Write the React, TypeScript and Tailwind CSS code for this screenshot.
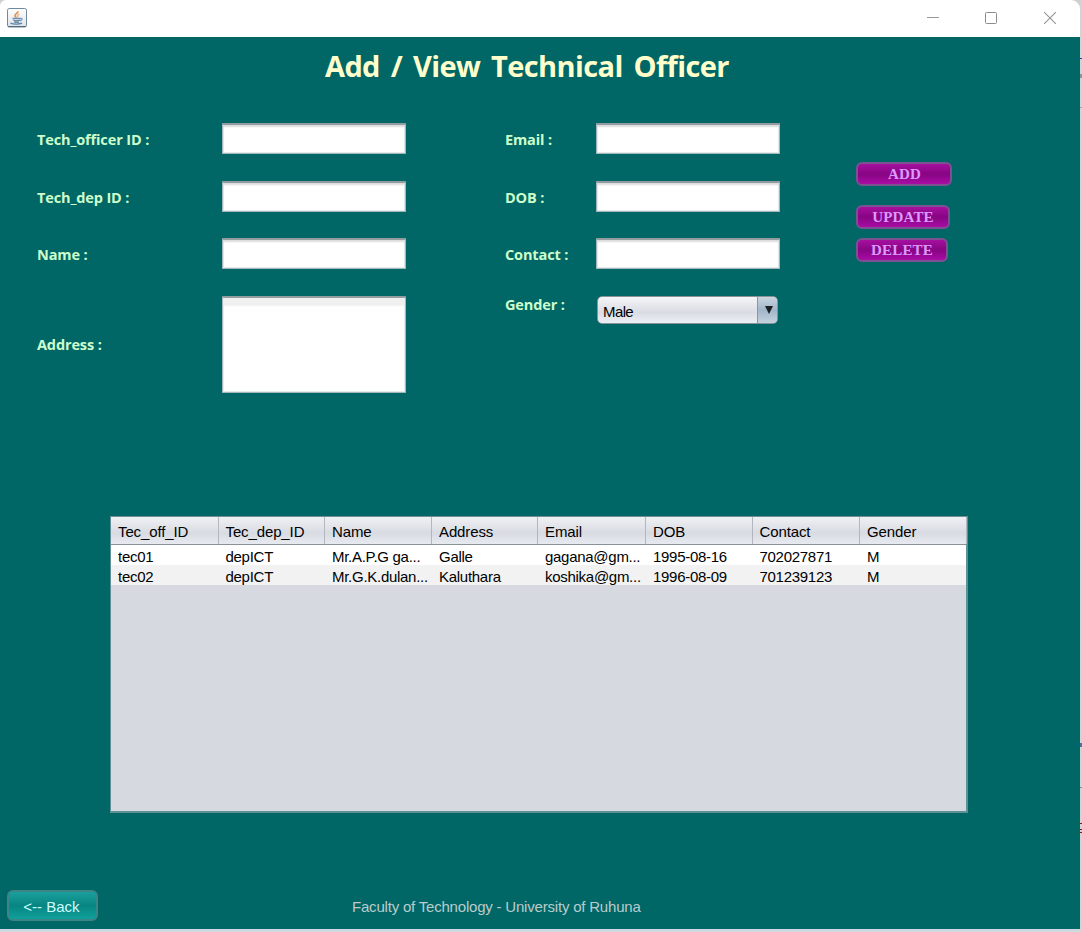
import React from "react";

const columns = ["Tec_off_ID", "Tec_dep_ID", "Name", "Address", "Email", "DOB", "Contact", "Gender"];

const rows = [
  ["tec01", "depICT", "Mr.A.P.G ga...", "Galle", "gagana@gm...", "1995-08-16", "702027871", "M"],
  ["tec02", "depICT", "Mr.G.K.dulan...", "Kaluthara", "koshika@gm...", "1996-08-09", "701239123", "M"],
];

const tableGrid = "grid grid-cols-[107.5px_106.5px_107px_106px_108px_106.5px_107.5px_107px]";

const sans = "font-['Liberation_Sans',Arial,sans-serif]";
const humanist = "font-['Open_Sans','Noto_Sans',sans-serif]";

function TitleBar() {
  return (
    <header className="flex h-[37px] items-center justify-between rounded-tl-md rounded-tr-[9px] bg-white pb-0.5">
      <svg className="ml-[7px] block" width="20" height="20" viewBox="0 0 20 20" fill="none">
        <defs>
          <linearGradient id="cup-bg" x1="0" y1="0" x2="0" y2="1">
            <stop offset="0" stopColor="#ffffff" />
            <stop offset="1" stopColor="#dde2e8" />
          </linearGradient>
        </defs>
        <rect x="0.5" y="0.5" width="19" height="18.5" rx="1.8" fill="url(#cup-bg)" stroke="#71899c" />
        <path d="M1 18.5h18" stroke="#526b80" />
        <path d="M10.8 3.2c.8 2-3.2 2.8-2.8 4.5.2.9 1 1.3 1.1 2" stroke="#e5914d" strokeWidth="1.7" />
        <path d="M12.3 6.2c-1.8.8-2.2 1.5-1.1 3.2" stroke="#eba56b" strokeWidth="1.2" />
        <path d="M5.5 10.5h8.2M6.3 12.2c2 .7 4.6.7 6.7 0M7 13.8c1.6.6 3.6.6 5.1 0" stroke="#6e91ae" strokeWidth="1.3" />
        <path d="M13.5 10.4c2.2-.6 2.2 1.8-.6 2.5" stroke="#6e91ae" strokeWidth="1.1" />
        <path d="M3.5 15.2c2.6 1.2 9.2 1.2 11.5 0" stroke="#5d84a5" strokeWidth="1.4" />
      </svg>
      <div className="mr-6 flex items-center gap-[46px]">
        <svg width="12" height="12" viewBox="0 0 12 12"><path d="M0 5.5h12" stroke="#999999" /></svg>
        <svg width="12" height="12" viewBox="0 0 12 12" fill="none"><rect x="0.5" y="0.5" width="11" height="11" rx="1" stroke="#8c8c8c" /></svg>
        <svg className="ml-px" width="12" height="12" viewBox="0 0 12 12"><path d="M0 0l12 12M12 0L0 12" stroke="#949494" strokeWidth="1.1" /></svg>
      </div>
    </header>
  );
}

function Label({ children, className = "" }: { children: React.ReactNode; className?: string }) {
  return (
    <label className={`${humanist} whitespace-nowrap text-[14.5px] font-bold leading-5 tracking-[-0.13px] text-[#ccffcc] ${className}`}>
      {children}
    </label>
  );
}

const field =
  "block w-[184px] resize-none rounded-[1px] border border-t-2 border-x-[#a3b8bc] border-b-[#a3b8bc] border-t-[#939ca0] bg-white outline-none";

function Field() {
  return <input className={`${field} h-[31px] shadow-[inset_0_2px_2px_#dcdcde,inset_0_0_0_1px_#e6ebec]`} />;
}

function ActionButton({ children, className }: { children: React.ReactNode; className: string }) {
  return (
    <button
      className={`${className} flex h-6 items-center justify-center rounded-[6px] border-2 border-[#79528f] bg-linear-to-b from-[#a6109f] via-[#870583] to-[#a90da5] font-['Liberation_Serif',serif] text-[15px] font-bold leading-none tracking-[0.15px] text-[#dd99ff]`}
    >
      {children}
    </button>
  );
}

function RecordsTable() {
  return (
    <section className={`${sans} ml-[110px] mt-[122px] h-[297px] w-[858px] border border-r-2 border-b-2 border-[#5f9095] border-t-[#718f96] bg-[#d6d9e0] text-[15px] text-black`}>
      <div className={`${tableGrid} h-7 border-b border-[#8a9196] bg-linear-to-b from-[#f0f1f4] via-[#d8dbe2] via-60% to-[#e7ebf0]`}>
        {columns.map((name) => (
          <div key={name} className="overflow-hidden whitespace-nowrap border-r border-[#b2b7bf] pl-[7px] pt-px leading-7 tracking-[-0.12px]">
            {name}
          </div>
        ))}
      </div>
      {rows.map((row) => (
        <div key={row[0]} className={`${tableGrid} h-5 bg-white last:bg-[#f2f2f2]`}>
          {row.map((value, i) => (
            <div key={i} className="whitespace-nowrap pl-[7px] pt-px leading-[22px] tracking-[-0.28px]">
              {value}
            </div>
          ))}
        </div>
      ))}
    </section>
  );
}

export default function App() {
  return (
    <div className="flex h-[932px] w-[1082px] overflow-hidden bg-[#d0d0d0]">
      <div className="flex w-[1080px] flex-col">
        <TitleBar />
        <main className="flex h-[892px] flex-col bg-[#006666]">
          <h1 className={`${humanist} ml-[325px] mt-[9px] h-10 whitespace-nowrap text-[29px] font-bold leading-10 tracking-[-0.62px] text-[#ffffcc] [word-spacing:4px]`}>
            Add / View Technical Officer
          </h1>

          <form className="mt-[37px] flex h-[271px]">
            <div className="ml-[37px] grid h-[271px] grid-cols-[185px_184px] grid-rows-[58px_57px_58px_98px] items-start">
              <Label className="mt-[7px]">Tech_officer ID :</Label>
              <Field />
              <Label className="mt-[7px]">Tech_dep ID :</Label>
              <Field />
              <Label className="mt-[7px]">Name :</Label>
              <Field />
              <Label className="mt-[39px]">Address :</Label>
              <textarea className={`${field} h-[97px] shadow-[inset_0_8px_2px_#f0f0f1,inset_0_0_0_1px_#e6ebec]`} />
            </div>
            <div className="ml-[99px] grid h-[271px] grid-cols-[91px_184px] grid-rows-[58px_57px_58px_98px] items-start">
              <Label className="mt-[7px]">Email :</Label>
              <Field />
              <Label className="mt-[7px]">DOB :</Label>
              <Field />
              <Label className="mt-[7px]">Contact :</Label>
              <Field />
              <Label className="-mt-px">Gender :</Label>
              <div className={`${sans} ml-px flex h-[28px] w-[181px] overflow-hidden rounded-[5px] border border-[#8a9197] bg-linear-to-b from-[#f4f5f7] via-[#d9dce3] via-60% to-[#edf0f4] text-[15px] text-black`}>
                <span className="flex-1 pl-[5px] pt-px leading-[27px] tracking-[-0.6px]">Male</span>
                <span className="flex w-5 justify-center border-l border-[#8498ab] bg-linear-to-b from-[#c9d5e1] via-[#a2b5c8] to-[#c3d2df] pl-0.5 pt-[9px]">
                  <svg width="8" height="8" viewBox="0 0 8 8"><path d="M0 0h8L4 8z" fill="#1b1e22" /></svg>
                </span>
              </div>
            </div>
            <div className="ml-[76px] flex flex-col pt-[39px]">
              <ActionButton className="w-24 pl-px">ADD</ActionButton>
              <ActionButton className="mt-[19px] w-[94px]">UPDATE</ActionButton>
              <ActionButton className="mt-[9px] w-[92px]">DELETE</ActionButton>
            </div>
          </form>

          <RecordsTable />

          <footer className={`${sans} mt-[77px] flex text-[15px]`}>
            <button className="ml-[7px] h-[31px] w-[91px] rounded-md border-2 border-[#3b8586] bg-linear-to-b from-[#1aa09e] via-[#078582] to-[#10a09c] pr-0.5 pt-[3px] text-[#ccffff]">
              &lt;-- Back
            </button>
            <span className="ml-[254px] mt-[7px] leading-5 tracking-[-0.2px] text-[#b9cccc]">Faculty of Technology - University of Ruhuna</span>
          </footer>
        </main>
        <div className="h-[3px] bg-[#d0d8e1]" />
      </div>
      <aside className="flex w-0.5 flex-col bg-[#d3d3d3]">
        <i className="mt-[58px] h-px bg-[#3a32ba]" />
        <i className="mt-[15px] h-1 bg-[#949494]" />
        <i className="mt-[29px] h-px bg-[#aaa68f]" />
        <i className="mt-[635px] h-1 bg-[#4c6fa4]" />
        <i className="mt-10 h-px bg-[#8b8b8b]" />
        <i className="mt-[35px] h-px bg-[#8b1717]" />
        <i className="mt-[5px] h-px bg-[#8b1717]" />
        <i className="mt-[2px] h-px bg-[#8b1717]" />
      </aside>
    </div>
  );
}
